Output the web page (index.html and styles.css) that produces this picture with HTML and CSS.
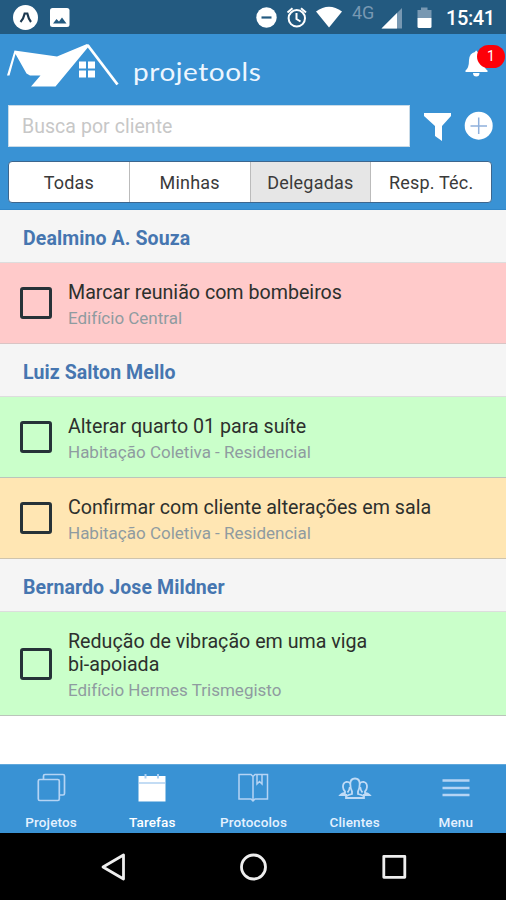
FILE: index.html
```
<!DOCTYPE html>
<html lang="pt-BR">
<head>
<meta charset="utf-8">
<title>Projetools</title>
<link rel="stylesheet" href="styles.css">
</head>
<body>
<div class="status">
  <svg class="status-left" width="80" height="34" viewBox="0 0 80 34">
    <circle cx="25.5" cy="17.5" r="12.5" fill="#fff"/>
    <path d="M20.5 22 Q23.5 19 24.7 13.5 H27.3 Q28.5 19 31 22" fill="none" stroke="#1c3850" stroke-width="2.2"/>
    <rect x="50" y="8" width="19.5" height="19" rx="2.5" fill="#fff"/>
    <path d="M53 23.5 L56.5 19 L59 21.5 L62 17.5 L66.5 23.5Z" fill="#235a80"/>
  </svg>
  <svg class="status-icons" width="94" height="34" viewBox="253 0 94 34">
    <circle cx="266.5" cy="17.5" r="10.2" fill="#fff"/><path d="M261.5 17.5H271.5" stroke="#235a80" stroke-width="2.2"/>
    <g fill="none" stroke="#fff" stroke-width="2"><circle cx="296.8" cy="18.3" r="8.2"/><path d="M296.5 13V19L300.5 21.5M287.5 12.5L292.5 8.3M306 12.5L301 8.3"/></g>
    <path d="M316 11.5Q329 2 342 11.5L329 27.5Z" fill="#fff"/>
  </svg>
  <span class="net">4G</span>
  <svg width="54" height="34" viewBox="380 0 54 34">
    <path d="M381.5 28.5L402 8V28.5Z" fill="#7898b2"/><path d="M381.5 28.5L397 13V28.5Z" fill="#fff"/>
    <path d="M417.5 10H421V7.5H427.5V10H431.5V18H417.5Z" fill="#7898b2"/><path d="M417.5 18H431.5V26.5Q431.5 28 430 28H419Q417.5 28 417.5 26.5Z" fill="#fff"/>
  </svg>
  <span class="clock">15:41</span>
</div>
<header class="header">
  <div class="brand">
    <svg class="logo" width="120" height="48" viewBox="0 40 120 48">
      <path d="M14.5 50.5L57 56.5L87 44L89.500 45.500L55.500 86.500H31L40.500 75.500H30L26.500 73.500L15.500 54L9.500 75.500H7Z" fill="#fff"/>
      <path d="M87.5 45L117.5 84.5" stroke="#fff" stroke-width="2.8"/>
      <path d="M79 61.5h7v7h-7zM88 61.5h7v7h-7zM79 70.5h7v7h-7zM88 70.5h7v7h-7z" fill="#fff"/>
    </svg>
    <span class="wordmark">projetools</span>
    <div class="bell">
      <svg width="24" height="28" viewBox="465 50 24 28"><path d="M465.5 72V70.5Q469 68 469 60Q469.5 53 475 52Q476 49 477.5 52Q483 53 483.500 60Q483.500 68 487.500 70.500V72Z" fill="#fff"/><path d="M473 73H479.500Q479.500 76.500 476.300 76.500T473 73Z" fill="#fff"/></svg>
      <span class="count">1</span>
    </div>
  </div>
  <div class="search">
    <input class="field" type="text" placeholder="Busca por cliente">
    <svg width="72" height="42" viewBox="422 105 72 42">
      <path d="M424 113H451V116L442 126V141L435 136V126L424 116Z" fill="#fff"/>
      <circle cx="478.700" cy="125.700" r="14" fill="#fff"/><path d="M470.500 126H487M478.700 117.500V134" stroke="#8fb0dc" stroke-width="1.500"/>
    </svg>
  </div>
  <nav class="segments">
    <span class="seg">Todas</span><span class="seg">Minhas</span><span class="seg active">Delegadas</span><span class="seg">Resp. Téc.</span>
  </nav>
</header>
<main class="list">
  <h2 class="person">Dealmino A. Souza</h2>
  <div class="task red"><i class="box"></i><div><p class="title">Marcar reunião com bombeiros</p><p class="sub">Edifício Central</p></div></div>
  <h2 class="person">Luiz Salton Mello</h2>
  <div class="task green"><i class="box"></i><div><p class="title">Alterar quarto 01 para suíte</p><p class="sub">Habitação Coletiva - Residencial</p></div></div>
  <div class="task amber"><i class="box"></i><div><p class="title">Confirmar com cliente alterações em sala</p><p class="sub">Habitação Coletiva - Residencial</p></div></div>
  <h2 class="person">Bernardo Jose Mildner</h2>
  <div class="task green tall"><i class="box"></i><div><p class="title">Redução de vibração em uma viga<br>bi-apoiada</p><p class="sub">Edifício Hermes Trismegisto</p></div></div>
</main>
<nav class="tabs">
  <div class="tab"><svg width="34" height="34" viewBox="0 0 34 34" fill="none" stroke="#b5d4f4" stroke-width="1.700"><rect x="4.300" y="9.500" width="21" height="21" rx="1.500"/><path d="M9.500 9V6Q9.500 4.500 11 4.500H29Q30.500 4.500 30.500 6V23.500Q30.500 25 29 25H26"/></svg><span>Projetos</span></div>
  <div class="tab on"><svg width="34" height="34" viewBox="0 0 34 34"><path d="M3.500 6H30.500V31.500H3.500Z" fill="#fff"/><path d="M3.500 13H30.500" stroke="#9cc5ed" stroke-width="1.200"/><path d="M10.500 4V8.500M23 4V8.500" stroke="#abcff2" stroke-width="2"/></svg><span>Tarefas</span></div>
  <div class="tab"><svg width="34" height="34" viewBox="0 0 34 34" fill="none" stroke="#b5d4f4" stroke-width="1.500"><path d="M3 4.500H15L17 6.500L19 4.500H31.500V29H19L17 31L15 29H3Z M17 6.500V31M21 5V14L23.500 11.500L26 14V5"/></svg><span>Protocolos</span></div>
  <div class="tab"><svg width="34" height="34" viewBox="0 0 34 34" fill="none" stroke="#c0dbf6" stroke-width="1.800"><path d="M8 28V26.300Q10 25 14 24V21.500Q12.300 18.500 12.300 14Q12.300 8.500 17 8.500T21.700 14Q21.700 18.500 20 21.500V24Q24 25 26 26.300V28Z"/><path d="M12.500 13.500Q10.500 11.500 8 12Q4.800 13 5 17Q5.200 20 7 21.500V23Q4 23.500 2.500 25H9M21.500 13.500Q23.500 11.500 26 12Q29.200 13 29 17Q28.800 20 27 21.500V23Q30 23.500 31.500 25H25M9.500 22.500Q11.500 20.500 11.800 17M24.500 22.500Q22.500 20.500 22.200 17"/></svg><span>Clientes</span></div>
  <div class="tab"><svg width="34" height="34" viewBox="0 0 34 34"><path d="M3.500 10.500H30.500M3.500 18H30.500M3.500 25H30.500" stroke="#b5d4f4" stroke-width="2.700"/></svg><span>Menu</span></div>
</nav>
<footer class="system">
  <svg width="506" height="67" viewBox="0 833 506 67" fill="none" stroke="#eee" stroke-width="2.800" stroke-linejoin="round"><path d="M103 867L123.500 855V879Z"/><circle cx="253.500" cy="867" r="12"/><rect x="383.800" y="856.300" width="21" height="21"/></svg>
</footer>
</body>
</html>
```

FILE: styles.css
```
* { box-sizing: border-box; }
body { margin: 0; width: 506px; height: 900px; overflow: hidden; background: #fff; font-family: Roboto, sans-serif; display: flex; flex-direction: column; }
svg { display: block; flex: none; }
.status { height: 34px; background: #235a80; display: flex; flex: none; color: #fff; }
.status-icons { margin-left: 173px; }
.net { width: 33px; padding: 3px 0 0 5px; font-size: 18px; line-height: 20px; letter-spacing: 0; color: #7898b2; }
.clock { margin-left: 12px; font-size: 20px; line-height: 36px; font-weight: 500; letter-spacing: -.4px; }
.header { height: 176px; flex: none; background: #3992d4; padding: 6px 0 0 8px; border-bottom: 1px solid #3187c9; }
.brand { height: 64px; display: flex; margin-left: -8px; }
.wordmark { flex: none; margin-left: 13px; padding-top: 13px; color: #edf6ff; font: 24.500px/38px Lato, sans-serif; letter-spacing: .5px; white-space: nowrap; width: 132px; transform: scaleX(1.14); transform-origin: left; }
.bell { position: relative; margin: 10px 0 0 200px; }
.count { position: absolute; left: 12px; top: -5px; width: 28px; height: 23px; border-radius: 12px; background: #fd0008; color: #fff; font-size: 14px; line-height: 23px; text-align: center; }
.search { display: flex; height: 42px; gap: 12px; margin-top: 1px; }
.field { width: 402px; height: 42px; border: 1px solid #c9dbe8; border-radius: 0; padding: 1px 13px 0; font: 19.500px Roboto, sans-serif; letter-spacing: .05px; background: #fff; outline: 0; }
.field::placeholder { color: #c7c7c7; opacity: 1; }
.segments { display: flex; margin-top: 14px; width: 484px; height: 42px; border: 1px solid #3c668e; border-radius: 4px; overflow: hidden; background: #fff; }
.seg { flex: 1; border-left: 1px solid #bbb; text-align: center; font-size: 18px; line-height: 42px; letter-spacing: .2px; color: #3a3a3a; }
.seg:first-child { border-left: 0; }
.seg.active { background: #e6e6e6; }
.list { height: 554px; flex: none; }
.person { height: 53px; margin: 0; padding: 3px 0 0 23px; border-bottom: 1px solid #ddd; background: #f5f5f5; color: #4676b0; font-size: 19.500px; line-height: 52px; font-weight: 700; letter-spacing: .1px; }
.task { height: 81px; display: flex; align-items: center; gap: 16px; padding-left: 20px; border-bottom: 1px solid #bbc5bb; }
.red { background: #ffcaca; border-color: #dac4c4; }
.green { background: #caffca; }
.amber { background: #ffe6b3; border-color: #cfc4ad; }
.tall { height: 104px; }
.box { width: 32px; height: 32px; flex: none; border: 3px solid #263238; border-radius: 3px; }
.task p { margin: 0; white-space: nowrap; }
.title { padding-top: 5px; color: #2d302d; font-size: 19.650px; line-height: 23px; }
.sub { padding-top: 3px; color: #8f9ba0; font-size: 17px; line-height: 23px; }
.tabs { height: 69px; flex: none; background: #3992d4; display: flex; border-top: 1px solid #60a8dc; }
.tab { width: 101.200px; display: flex; flex-direction: column; align-items: center; color: #e4f1ff; font-size: 13.500px; font-weight: 500; line-height: 18px; letter-spacing: .15px; padding: 5px 0 0 1px; }
.tab svg { margin-bottom: 9px; }
.tab.on { color: #fff; }
.system { background: #000; height: 67px; flex: none; }
```
